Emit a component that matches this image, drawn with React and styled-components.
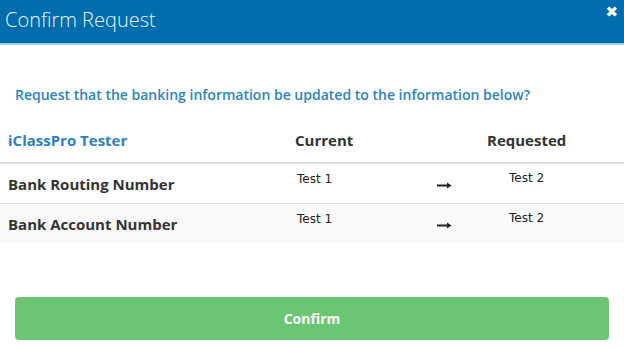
import React from "react";
import styled, { createGlobalStyle } from "styled-components";

const Global = createGlobalStyle`
  html, body { margin: 0; padding: 0; background: #fff; }
  body { font-family: "Open Sans", "DejaVu Sans", sans-serif; width: 624px; height: 348px; overflow: hidden; }
`;

const Modal = styled.div`
  width: 624px;
  height: 348px;
  display: flex;
  flex-direction: column;
  background: #fff;
`;

const Header = styled.div`
  height: 45px;
  background: #006dad;
  border-bottom: 2px solid #a8c9de;
  display: flex;
  align-items: center;
  justify-content: space-between;
  padding: 0 6px 0 5px;
  box-sizing: border-box;
`;

const Title = styled.h1`
  margin: 0;
  font-family: "Open Sans", sans-serif;
  font-weight: 300;
  font-size: 20px;
  color: #eef5fa;
  margin-top: -4px;
`;

const Close = styled.button`
  border: 0;
  background: none;
  padding: 0;
  color: #fff;
  font-family: "DejaVu Sans", sans-serif;
  font-weight: bold;
  font-size: 15px;
  line-height: 1;
  align-self: flex-start;
  margin-top: 5px;
  cursor: pointer;
`;

const Body = styled.div`
  padding-top: 41px;
  display: flex;
  flex-direction: column;
`;

const Question = styled.p`
  margin: 0 0 0 15px;
  font-size: 14px;
  font-weight: 600;
  color: #2a84c1;
  line-height: 18px;
`;

const Grid = styled.div`
  margin-top: 22px;
  display: grid;
  grid-template-columns: 287px 143px 45px 1fr;
`;

const Row = styled.div`
  display: contents;
`;

const Cell = styled.div`
  height: ${(p) => p.$h || 39}px;
  box-sizing: border-box;
  padding-left: ${(p) => p.$pl || 0}px;
  padding-top: ${(p) => p.$pt || 0}px;
  padding-bottom: ${(p) => p.$pb || 0}px;
  background: ${(p) => (p.$alt ? "#f9f9f9" : "#fff")};
  border-top: ${(p) => (p.$bt ? `${p.$bt}px solid #dcdcdc` : "0")};
  display: flex;
  align-items: ${(p) => (p.$top ? "flex-start" : "center")};
`;

const HeadLabel = styled.span`
  font-size: 15px;
  font-weight: 700;
  color: ${(p) => (p.$blue ? "#2f7fbf" : "#333")};
`;

const Label = styled.span`
  font-size: 15px;
  font-weight: 700;
  color: #333;
`;

const Value = styled.span`
  font-family: "DejaVu Sans", Verdana, sans-serif;
  font-size: 12px;
  color: #222;
`;

const ArrowIcon = styled.svg`
  display: block;
  margin-top: 4px;
`;

const Footer = styled.div`
  margin-top: auto;
  padding: 0 15px 8px 15px;
`;

const ConfirmButton = styled.button`
  width: 100%;
  height: 43px;
  border: 0;
  border-radius: 4px;
  background: #6cc573;
  color: #fff;
  font-family: "Open Sans", sans-serif;
  font-weight: 700;
  font-size: 14px;
  cursor: pointer;
`;

const Arrow = () => (
  <ArrowIcon width="15" height="7" viewBox="0 0 15 7">
    <rect x="0" y="2.5" width="11" height="2" fill="#222" />
    <path d="M10 0.5 L14.5 3.5 L10 6.5 Z" fill="#222" />
  </ArrowIcon>
);

const rows = [
  { label: "Bank Routing Number", current: "Test 1", requested: "Test 2", alt: false, bt: 2 },
  { label: "Bank Account Number", current: "Test 1", requested: "Test 2", alt: true, bt: 1 },
];

export default function App() {
  return (
    <>
      <Global />
      <Modal>
        <Header>
          <Title>Confirm Request</Title>
          <Close aria-label="Close">✖</Close>
        </Header>
        <Body>
          <Question>Request that the banking information be updated to the information below?</Question>
          <Grid>
            <Row>
              <Cell $h={36} $pb={8} $pl={8}><HeadLabel $blue>iClassPro Tester</HeadLabel></Cell>
              <Cell $h={36} $pb={8} $pl={8}><HeadLabel>Current</HeadLabel></Cell>
              <Cell $h={36} />
              <Cell $h={36} $pb={8} $pl={12}><HeadLabel>Requested</HeadLabel></Cell>
            </Row>
            {rows.map((r) => (
              <Row key={r.label}>
                <Cell $alt={r.alt} $bt={r.bt} $h={r.bt + 39} $pl={8}><Label>{r.label}</Label></Cell>
                <Cell $alt={r.alt} $bt={r.bt} $h={r.bt + 39} $pl={10} $top $pt={8}><Value>{r.current}</Value></Cell>
                <Cell $alt={r.alt} $bt={r.bt} $h={r.bt + 39} $pl={7}><Arrow /></Cell>
                <Cell $alt={r.alt} $bt={r.bt} $h={r.bt + 39} $pl={34} $top $pt={7}><Value>{r.requested}</Value></Cell>
              </Row>
            ))}
          </Grid>
        </Body>
        <Footer>
          <ConfirmButton>Confirm</ConfirmButton>
        </Footer>
      </Modal>
    </>
  );
}
